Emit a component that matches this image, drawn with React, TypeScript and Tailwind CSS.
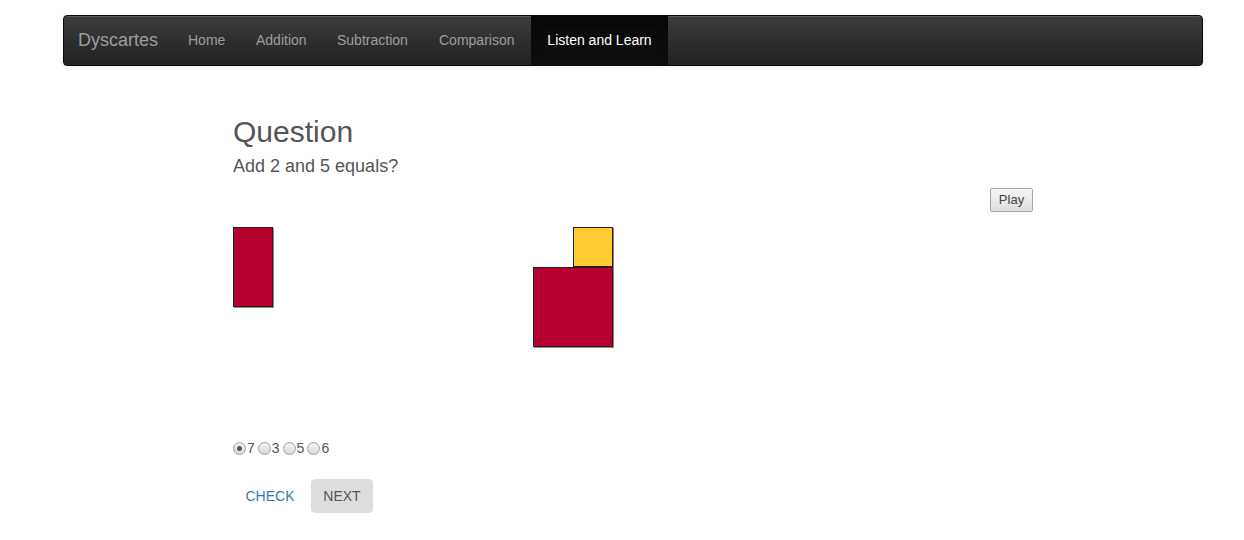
import React from "react";

const navItems: [string, string][] = [
  ["Home", "w-[68px]"],
  ["Addition", "w-[81px]"],
  ["Subtraction", "w-[102px]"],
  ["Comparison", "w-[107px]"],
];

function Radio({ checked, label }: { checked?: boolean; label: string }) {
  return (
    <span className="inline-flex items-center">
      <span className="relative inline-flex h-[13px] w-[13px] items-center justify-center rounded-full border border-[#a0a0a0] bg-gradient-to-b from-[#f4f4f4] to-[#d8d8d8]">
        {checked && <span className="h-[5px] w-[5px] rounded-full bg-[#555]" />}
      </span>
      <span className="ml-[1px]">{label}</span>
    </span>
  );
}

function Shape({ x, y, w, h, fill }: { x: number; y: number; w: number; h: number; fill: string }) {
  return (
    <g>
      <line x1={x + w + 0.5} y1={y + 1} x2={x + w + 0.5} y2={y + h + 1} stroke="#8a8a8a" strokeWidth={1} />
      <line x1={x + 1} y1={y + h + 0.5} x2={x + w + 1} y2={y + h + 0.5} stroke="#8a8a8a" strokeWidth={1} />
      <rect x={x + 0.5} y={y + 0.5} width={w - 1} height={h - 1} fill={fill} stroke="#2a1a1a" strokeWidth={1} />
    </g>
  );
}

export default function App() {
  return (
    <div className="h-[540px] w-[1244px] overflow-hidden bg-white font-['Liberation_Sans',Arial,sans-serif] text-[14px] text-[#555]">
      <div className="pl-[63px] pt-[15px]">
        <nav className="flex h-[51px] w-[1140px] items-stretch overflow-hidden rounded-[4px] border border-[#080808] bg-gradient-to-b from-[#3c3c3c] to-[#222222] shadow-[inset_0_1px_0_rgba(255,255,255,0.15),0_1px_5px_rgba(0,0,0,0.075)]">
          <span className="flex w-[109px] items-center pl-[14px] text-[18px] text-[#9d9d9d]">Dyscartes</span>
          {navItems.map(([n, w]) => (
            <span key={n} className={`flex items-center pl-[15px] text-[14px] text-[#9d9d9d] ${w}`}>
              {n}
            </span>
          ))}
          <span className="flex w-[137px] items-center justify-center bg-gradient-to-b from-[#080808] to-[#0f0f0f] text-[14px] text-white shadow-[inset_0_3px_9px_rgba(0,0,0,0.25)]">
            Listen and Learn
          </span>
        </nav>
      </div>

      <div className="ml-[233px] w-[800px]">
        <h2 className="mt-[49px] text-[30px] leading-[33px] text-[#555]">Question</h2>
        <p className="mt-[8px] text-[18px] leading-[20px] text-[#555]">Add 2 and 5 equals?</p>
        <div className="mt-[12px] flex justify-end">
          <button className="h-[24px] w-[43px] rounded-[2px] border border-[#a6a6a6] bg-gradient-to-b from-[#f6f6f6] to-[#dedede] text-[13px] text-[#444]">
            Play
          </button>
        </div>
        <svg className="mt-[15px] block" width={400} height={123}>
          <Shape x={0} y={0} w={40} h={80} fill="#b6002f" />
          <Shape x={340} y={0} w={40} h={40} fill="#ffcc33" />
          <Shape x={300} y={40} w={80} h={80} fill="#b6002f" />
        </svg>
        <div className="mt-[88px] flex h-[20px] items-center gap-[3px] text-[14px] leading-[20px] text-[#555]">
          <Radio checked label="7" />
          <Radio label="3" />
          <Radio label="5" />
          <Radio label="6" />
        </div>
        <div className="mt-[21px] flex gap-[4px]">
          <button className="h-[34px] w-[74px] rounded-[4px] border border-transparent text-[14px] text-[#337ab7]">
            CHECK
          </button>
          <button className="h-[34px] w-[62px] rounded-[4px] border border-[#dddddd] bg-[#dddddd] text-[14px] text-[#555]">
            NEXT
          </button>
        </div>
      </div>
    </div>
  );
}
